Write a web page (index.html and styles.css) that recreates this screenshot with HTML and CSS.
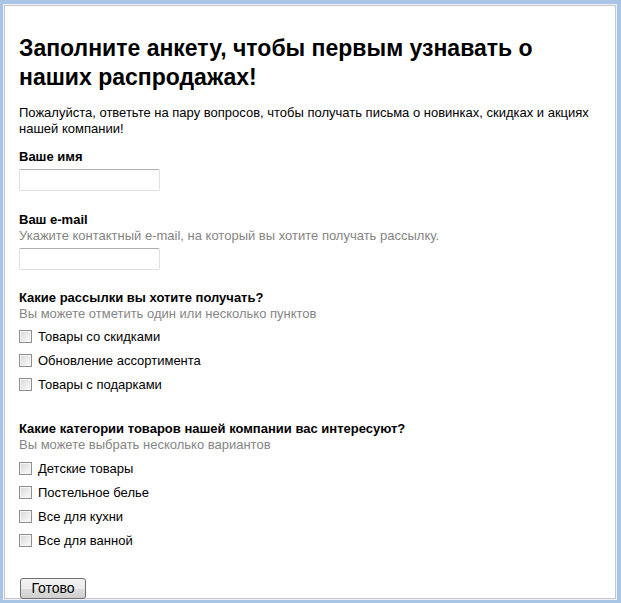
FILE: index.html
```html
<!DOCTYPE html>
<html lang="ru">
<head>
<meta charset="utf-8">
<title>Анкета</title>
<link rel="stylesheet" href="styles.css">
</head>
<body>
<div class="window">
  <div class="page">
    <h1 class="title">Заполните анкету, чтобы первым узнавать о наших распродажах!</h1>
    <p class="intro">Пожалуйста, ответьте на пару вопросов, чтобы получать письма о новинках, скидках и акциях нашей компании!</p>

    <div class="field field-name">
      <div class="label">Ваше имя</div>
      <input class="text-input" type="text">
    </div>

    <div class="field field-email">
      <div class="label">Ваш e-mail</div>
      <div class="hint">Укажите контактный e-mail, на который вы хотите получать рассылку.</div>
      <input class="text-input" type="text">
    </div>

    <div class="field field-mail">
      <div class="label">Какие рассылки вы хотите получать?</div>
      <div class="hint">Вы можете отметить один или несколько пунктов</div>
      <div class="options">
        <label class="option"><input class="check" type="checkbox"><span>Товары со скидками</span></label>
        <label class="option"><input class="check" type="checkbox"><span>Обновление ассортимента</span></label>
        <label class="option"><input class="check" type="checkbox"><span>Товары с подарками</span></label>
      </div>
    </div>

    <div class="field field-cat">
      <div class="label">Какие категории товаров нашей компании вас интересуют?</div>
      <div class="hint">Вы можете выбрать несколько вариантов</div>
      <div class="options">
        <label class="option"><input class="check" type="checkbox"><span>Детские товары</span></label>
        <label class="option"><input class="check" type="checkbox"><span>Постельное белье</span></label>
        <label class="option"><input class="check" type="checkbox"><span>Все для кухни</span></label>
        <label class="option"><input class="check" type="checkbox"><span>Все для ванной</span></label>
      </div>
    </div>

    <button class="submit" type="button">Готово</button>
  </div>
</div>
</body>
</html>
```

FILE: styles.css
```css
html, body {
  margin: 0;
  padding: 0;
  background: #a9c5e6;
  height: 100%;
  overflow: hidden;
}

body {
  font-family: "Liberation Sans", Arial, sans-serif;
  font-size: 13px;
  color: #000;
}

.window {
  box-sizing: border-box;
  margin: 4px 4px 0 3px;
  height: 596px;
  border: 1px solid #eef2f7;
  background: #fff;
  overflow: hidden;
}

.page {
  box-sizing: border-box;
  height: 100%;
  border: 1px solid #c4c6c9;
  background: #fff;
  padding: 28px 14px 0 14px;
}

.title {
  margin: 0;
  font-size: 23px;
  line-height: 29px;
  font-weight: bold;
}

.intro {
  margin: 13px 0 0 0;
  line-height: 16px;
}

.field {
  display: flex;
  flex-direction: column;
  align-items: flex-start;
}

.field-name { margin-top: 12px; }
.field-email { margin-top: 21px; }
.field-mail { margin-top: 20px; }
.field-cat { margin-top: 25px; }

.label {
  font-weight: bold;
  line-height: 16px;
}

.hint {
  color: #858585;
  line-height: 16px;
}

.text-input {
  box-sizing: border-box;
  width: 141px;
  height: 22px;
  margin: 4px 0 0 0;
  padding: 0 3px;
  border: 1px solid #dde0e5;
  border-top-color: #abadb3;
  border-radius: 2px;
  background: #fff;
  font: inherit;
}

.options {
  display: flex;
  flex-direction: column;
  margin-top: 2px;
}

.field-cat .options { margin-top: 3px; }

.option {
  display: flex;
  align-items: center;
  height: 24px;
  gap: 6px;
}

.check {
  -webkit-appearance: none;
  appearance: none;
  box-sizing: border-box;
  width: 13px;
  height: 13px;
  margin: 0;
  border: 1px solid #8f8f8f;
  background: linear-gradient(135deg, #d6d6d6 0%, #eeeeee 60%, #fbfbfb 100%);
  box-shadow: inset 0 0 0 1px #f4f4f4;
}

.submit {
  margin-top: 26px;
  margin-left: 1px;
  box-sizing: border-box;
  width: 66px;
  height: 21px;
  padding: 0;
  border: 1px solid #707070;
  border-radius: 3px;
  background: linear-gradient(to bottom, #f2f2f2 0%, #ebebeb 50%, #dddddd 51%, #cfcfcf 100%);
  font-family: "Liberation Sans", Arial, sans-serif;
  font-size: 14px;
  color: #000;
  line-height: 19px;
}
```
